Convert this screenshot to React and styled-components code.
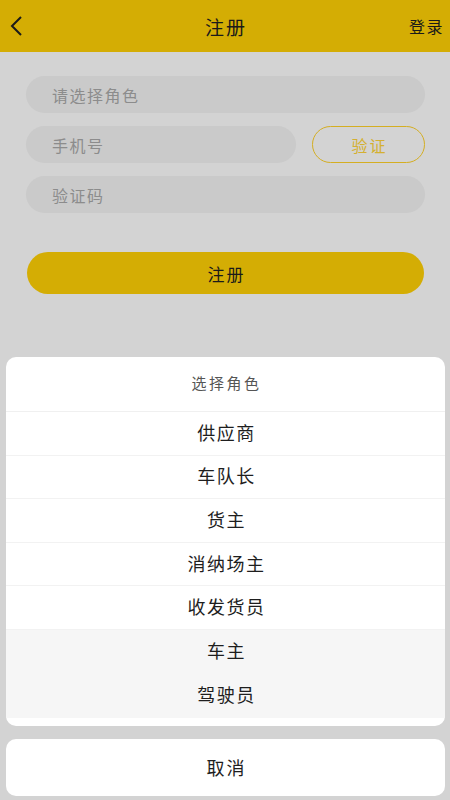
import React from "react";
import styled, { createGlobalStyle } from "styled-components";

const GlobalStyle = createGlobalStyle`
  html, body {
    margin: 0;
    padding: 0;
    background: #d3d3d3;
    font-family: "Noto Sans CJK SC", "Noto Sans", sans-serif;
  }
  * { box-sizing: border-box; }
`;

const Page = styled.div`
  width: 450px;
  height: 800px;
  position: relative;
  overflow: hidden;
  background: #d3d3d3;
`;

const Header = styled.div`
  height: 52px;
  background: #d4ad04;
  display: flex;
  align-items: center;
  justify-content: space-between;
  padding: 0 6px 0 8px;
  .title {
    position: absolute;
    left: 0;
    right: 0;
    text-align: center;
    font-size: 19px;
    letter-spacing: 2px;
    padding-left: 2px;
    color: #1a1a1a;
    pointer-events: none;
  }
  .back {
    display: flex;
    align-items: center;
    z-index: 1;
  }
  .login {
    font-size: 16px;
    letter-spacing: 1.5px;
    color: #1a1a1a;
    z-index: 1;
  }
`;

const Form = styled.div`
  padding: 24px 25px 0 26px;
  display: flex;
  flex-direction: column;
  gap: 13px;
`;

const Row = styled.div`
  display: flex;
  gap: 16px;
  & > :first-child {
    flex: 1;
  }
`;

const Field = styled.div`
  height: 37px;
  border-radius: 19px;
  background: #cacaca;
  display: flex;
  align-items: center;
  padding-left: 26px;
  font-size: 16px;
  letter-spacing: 1.5px;
  color: #8c8c8c;
`;

const VerifyButton = styled.div`
  width: 113px;
  height: 37px;
  border-radius: 19px;
  border: 1px solid #d4ae22;
  color: #d4b030;
  font-size: 16px;
  letter-spacing: 2px;
  padding-left: 2px;
  display: flex;
  align-items: center;
  justify-content: center;
`;

const Submit = styled.div`
  margin: 39px 26px 0 27px;
  height: 42px;
  border-radius: 21px;
  background: #d4ad04;
  display: flex;
  align-items: center;
  justify-content: center;
  font-size: 17px;
  letter-spacing: 2px;
  padding-left: 2px;
  color: #1a1a1a;
`;

const Sheet = styled.div`
  position: absolute;
  left: 6px;
  right: 5px;
  bottom: 4px;
  display: flex;
  flex-direction: column;
  gap: 13px;
`;

const Card = styled.div`
  background: #fff;
  border-radius: 10px;
  overflow: hidden;
`;

const SheetTitle = styled.div`
  height: 55px;
  display: flex;
  align-items: center;
  justify-content: center;
  font-size: 15px;
  letter-spacing: 2.5px;
  padding: 0 0 4px 2px;
  color: #555;
  border-bottom: 1px solid #f0f0f0;
`;

const Options = styled.div`
  padding-bottom: 8px;
`;

const Option = styled.div`
  height: ${(p) => (p.$muted ? "44px" : "43.6px")};
  display: flex;
  align-items: center;
  justify-content: center;
  font-size: 18px;
  letter-spacing: 1.5px;
  padding: 0 0 3px 2px;
  color: #1e1e1e;
  background: ${(p) => (p.$muted ? "#f6f6f6" : "#fff")};
  border-bottom: 1px solid ${(p) => (p.$muted ? "#f6f6f6" : "#f2f2f2")};
`;

const Cancel = styled(Card)`
  height: 57px;
  display: flex;
  align-items: center;
  justify-content: center;
  font-size: 18px;
  letter-spacing: 2px;
  padding: 0 0 2px 2px;
  color: #1e1e1e;
`;

const roles = [
  { name: "供应商" },
  { name: "车队长" },
  { name: "货主" },
  { name: "消纳场主" },
  { name: "收发货员" },
  { name: "车主", muted: true },
  { name: "驾驶员", muted: true },
];

export default function App() {
  return (
    <Page>
      <GlobalStyle />
      <Header>
        <span className="back">
          <svg width="18" height="22" viewBox="0 0 18 22">
            <path d="M13 2 L4 11 L13 20" fill="none" stroke="#1a1a1a" strokeWidth="2" />
          </svg>
        </span>
        <span className="title">注册</span>
        <span className="login">登录</span>
      </Header>
      <Form>
        <Field>请选择角色</Field>
        <Row>
          <Field>手机号</Field>
          <VerifyButton>验证</VerifyButton>
        </Row>
        <Field>验证码</Field>
      </Form>
      <Submit>注册</Submit>

      <Sheet>
        <Card>
          <SheetTitle>选择角色</SheetTitle>
          <Options>
            {roles.map((r) => (
              <Option key={r.name} $muted={r.muted}>
                {r.name}
              </Option>
            ))}
          </Options>
        </Card>
        <Cancel>取消</Cancel>
      </Sheet>
    </Page>
  );
}
